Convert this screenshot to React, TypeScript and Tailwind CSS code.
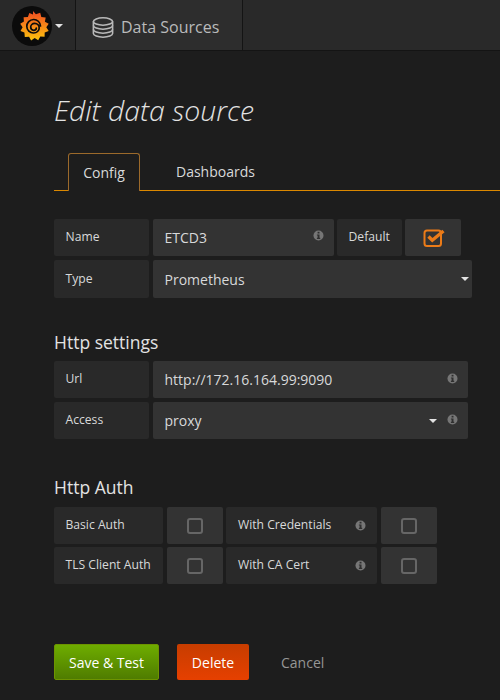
import { ReactNode } from "react";

const FONT = "font-['Open_Sans',sans-serif]";

function InfoIcon() {
  return (
    <svg width="11" height="11" viewBox="0 0 11 11" className="shrink-0">
      <circle cx="5.5" cy="5.5" r="5" fill="#767676" />
      <rect x="4.6" y="1.8" width="1.9" height="1.7" fill="#2f2f2f" />
      <path d="M3.9 4.4h2.6v3.4h.7v1.1H3.9V7.8h.7V5.5h-.7z" fill="#2f2f2f" />
    </svg>
  );
}

function Caret() {
  return <span className="w-0 h-0 border-x-4 border-x-transparent border-t-4 border-t-[#e3e3e3]" />;
}

function DatabaseIcon() {
  return (
    <svg width="22" height="21" viewBox="0 0 22 21" fill="none" stroke="#b9b9b9" strokeWidth="1.6">
      <ellipse cx="11" cy="4.5" rx="9.6" ry="3.7" />
      <path d="M1.4 4.5v12c0 2 4.3 3.7 9.6 3.7s9.6-1.700 9.6-3.700v-12" />
      <path d="M1.4 8.5c0 2 4.3 3.7 9.6 3.7s9.6-1.700 9.6-3.700" />
      <path d="M1.4 12.5c0 2 4.3 3.7 9.6 3.7s9.6-1.700 9.6-3.700" />
    </svg>
  );
}

function GrafanaLogo() {
  return (
    <svg width="40" height="40" viewBox="0 0 40 40">
      <defs>
        <linearGradient id="gf" x1="0" y1="0" x2="0" y2="1">
          <stop offset="0" stopColor="#ee4b23" />
          <stop offset="1" stopColor="#fcc30d" />
        </linearGradient>
      </defs>
      <circle cx="20" cy="20" r="20" fill="#0b0b0b" />
      <path
        d="M21 5l2.900 3.300 4.300-1.500 1.100 4.100 4.400.5-.8 4.300 3.800 2.100-2.400 3.500 2.400 3.600-4 1.500-.1 4.300-4.300-.2-2.100 3.700-3.500-2.200-3.600 2.400-2-3.700-4.300.3-.4-4.400-3.900-1.600 2.100-3.800-2.400-3.400 3.700-2.200-.3-4.300 4.300-.4 1.400-4 3.700 1.500z"
        fill="url(#gf)"
      />
      {/* swirl */}
      <path
        d="M28.500 20c-.3-3.900-3.300-6.600-6.900-6.500-3.900.100-6.900 3.200-6.800 7 .1 3.700 3.100 6.500 6.800 6.500 3.200 0 5.600-2.300 5.600-5.100 0-2.600-2-4.500-4.500-4.500-2.300 0-4 1.700-4 3.700 0 1.800 1.400 3.200 3.100 3.200 1.400 0 2.500-1 2.500-2.300"
        fill="none"
        stroke="#0b0b0b"
        strokeWidth="1.700"
        strokeLinecap="round"
      />
    </svg>
  );
}

function Label({ width, children }: { width: string; children: ReactNode }) {
  return (
    <div className={`${width} h-full bg-[#292929] pl-[11.5px] pr-2 flex items-center text-[12.150px] leading-none text-[#d8d9da] rounded-[2px]`}>
      {children}
    </div>
  );
}

function Field({ width, children }: { width: string; children: ReactNode }) {
  return (
    <div className={`${width} h-full bg-[#333333] pl-[11.5px] pr-[10px] flex items-center justify-between text-[14px] text-[#d8d9da] rounded-[2px]`}>
      {children}
    </div>
  );
}

function CheckBox({ checked = false }: { checked?: boolean }) {
  return (
    <div className="w-[56px] h-full bg-[#333333] flex items-center justify-center rounded-[2px]">
      {checked ? (
        <svg width="22" height="20" viewBox="0 0 22 20" fill="none" className="ml-[2px]">
          <rect x="1.500" y="2.500" width="16.500" height="15.500" rx="2.500" stroke="#eb7b18" strokeWidth="2" />
          <path d="M5.500 8.500l3.800 3.800L20.500 3" stroke="#eb7b18" strokeWidth="3.400" />
        </svg>
      ) : (
        <span className="w-4 h-4 border-2 border-[#666666] rounded-[3px]" />
      )}
    </div>
  );
}

export default function App() {
  return (
    <div className={`${FONT} w-[500px] h-[700px] overflow-hidden bg-[#1d1d1d] text-[#d8d9da]`}>
      {/* Top nav */}
      <div className="h-[51px] bg-[#292929] border-b border-[#141414] flex">
        <div className="w-[76px] border-r border-[#141414] flex items-center pl-[12px] gap-[3px] pt-[1px]">
          <GrafanaLogo />
          <Caret />
        </div>
        <div className="w-[167px] border-r border-[#141414] bg-[#2d2d2d] flex items-center pl-[16px] gap-[7px] pt-[4px] text-[16px] text-[#b9babb]">
          <DatabaseIcon />
          <span>Data Sources</span>
        </div>
      </div>

      <div className="pl-[54px]">
        <h1 className="mt-[41px] h-[36px] text-[28.400px] leading-[36px] italic font-light text-[#e3e3e3]">Edit data source</h1>

        {/* Tabs */}
        <div className="mt-[25px] h-[38px] border-b border-[#db8800] flex pl-[14px]">
          <div className="w-[72px] h-[38px] border border-b-0 border-[#9c6a2b] rounded-t-[3px] bg-[#1d1d1d] flex items-center justify-center text-[14px] text-[#d8d9da]">
            Config
          </div>
          <div className="ml-[36px] h-[37px] flex items-center text-[14px] text-[#d8d9da] pb-[1px]">Dashboards</div>
        </div>

        {/* Name / type */}
        <div className="mt-[28px] h-[37px] flex">
          <Label width="w-[95px]">Name</Label>
          <div className="w-1" />
          <Field width="w-[181px]">
            <span>ETCD3</span>
            <span className="mb-[5px]">
              <InfoIcon />
            </span>
          </Field>
          <div className="w-[3px]" />
          <Label width="w-[65px]">Default</Label>
          <div className="w-[3px]" />
          <CheckBox checked />
        </div>
        <div className="mt-1 h-[38px] flex">
          <Label width="w-[95px]">Type</Label>
          <div className="w-1" />
          <Field width="w-[319px]">
            <span>Prometheus</span>
            <span className="flex -mr-[7px]">
              <Caret />
            </span>
          </Field>
        </div>

        {/* Http settings */}
        <h3 className="mt-[30px] h-[33px] text-[17.500px] leading-[28px] text-[#e3e3e3]">Http settings</h3>
        <div className="h-[37px] flex">
          <Label width="w-[95px]">Url</Label>
          <div className="w-1" />
          <Field width="w-[315px]">
            <span>http://172.16.164.99:9090</span>
            <span className="mb-[3px]">
              <InfoIcon />
            </span>
          </Field>
        </div>
        <div className="mt-1 h-[37px] flex">
          <Label width="w-[95px]">Access</Label>
          <div className="w-1" />
          <Field width="w-[315px]">
            <span>proxy</span>
            <span className="flex items-center gap-[10px]">
              <Caret />
              <span className="mb-[3px]">
                <InfoIcon />
              </span>
            </span>
          </Field>
        </div>

        {/* Http Auth */}
        <h3 className="mt-[34px] h-[34px] text-[17.500px] leading-[28px] text-[#e3e3e3]">Http Auth</h3>
        <div className="h-[37px] flex">
          <Label width="w-[109px]">Basic Auth</Label>
          <div className="w-1" />
          <CheckBox />
          <div className="w-[3px]" />
          <div className="w-[151px] h-full bg-[#292929] pl-3 pr-[11px] flex items-center justify-between text-[12.150px] text-[#d8d9da] rounded-[2px]">
            <span>With Credentials</span>
            <InfoIcon />
          </div>
          <div className="w-1" />
          <CheckBox />
        </div>
        <div className="mt-[3px] h-[37px] flex">
          <Label width="w-[109px]">TLS Client Auth</Label>
          <div className="w-1" />
          <CheckBox />
          <div className="w-[3px]" />
          <div className="w-[151px] h-full bg-[#292929] pl-3 pr-[11px] flex items-center justify-between text-[12.150px] text-[#d8d9da] rounded-[2px]">
            <span>With CA Cert</span>
            <InfoIcon />
          </div>
          <div className="w-1" />
          <CheckBox />
        </div>

        {/* Actions */}
        <div className="mt-[60px] flex items-center h-[36px] text-[14px]">
          <div className="w-[105px] h-full flex items-center justify-center rounded-[2px] border border-[#6d9400] bg-gradient-to-b from-[#6ead00] to-[#4f7c00] text-[#ffffff]">
            Save &amp; Test
          </div>
          <div className="ml-[18px] w-[72px] h-full flex items-center justify-center rounded-[2px] bg-gradient-to-b from-[#c73d00] to-[#e64000] text-[#ffffff]">
            Delete
          </div>
          <div className="ml-[32px] text-[#969696]">Cancel</div>
        </div>
      </div>
    </div>
  );
}
